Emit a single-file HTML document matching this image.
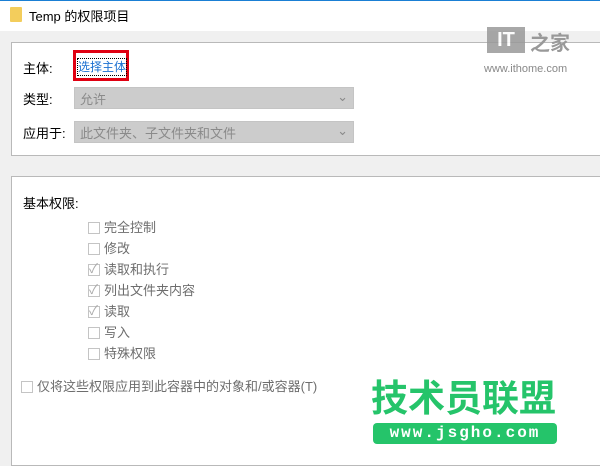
<!DOCTYPE html>
<html><head><meta charset="utf-8"><style>
body{margin:0;width:600px;height:450px;overflow:hidden;background:#f0f0f0;font-family:"Liberation Sans","Noto Sans CJK SC",sans-serif;font-size:12px;color:#000;position:relative}
.a{position:absolute}
.title{left:0;top:0;width:600px;height:31px;background:#fff;border-top:1px solid #1a7fd4;box-sizing:border-box}
.panel{background:#fff;border:1px solid #b9b9b9;box-sizing:border-box}
.dd{background:#ccc;border:1px solid #c4c4c4;box-sizing:border-box;color:#8a8a8a;padding:1px 5px;font-size:13px}
.cb{width:12px;height:12px;border:1px solid #c4c4c4;background:#fff;box-sizing:border-box}
.gt{color:#6d6d6d;font-size:13px}
</style></head><body>
<div class="a title"></div>
<div class="a" style="left:10px;top:7px;width:12px;height:15px;background:#f3cd5c;border-radius:1px"></div>
<div class="a" style="left:29px;top:6px;font-size:13px">Temp 的权限项目</div>
<div class="a panel" style="left:11px;top:42px;width:600px;height:114px"></div>
<div class="a" style="left:23px;top:58px;font-size:13px">主体:</div>
<div class="a" style="left:73px;top:50px;width:56px;height:31px;border:3px solid #e00012;box-sizing:border-box"></div>
<div class="a" style="left:77px;top:58px;color:#1a6fd0;border:1px dotted #000;padding:0;font-size:12px;line-height:16px">选择主体</div>
<div class="a" style="left:23px;top:89px;font-size:13px">类型:</div>
<div class="a dd" style="left:74px;top:87px;width:280px;height:22px">允许<span style="position:absolute;right:5px;top:1px">⌄</span></div>
<div class="a" style="left:23px;top:123px;font-size:13px">应用于:</div>
<div class="a dd" style="left:74px;top:121px;width:280px;height:22px">此文件夹、子文件夹和文件<span style="position:absolute;right:5px;top:1px">⌄</span></div>
<div class="a panel" style="left:11px;top:176px;width:600px;height:290px"></div>
<div class="a" style="left:23px;top:193px;font-size:13px">基本权限:</div>
<div class="a cb" style="left:88px;top:222px"></div><div class="a gt" style="left:104px;top:217px">完全控制</div>
<div class="a cb" style="left:88px;top:243px"></div><div class="a gt" style="left:104px;top:238px">修改</div>
<div class="a cb" style="left:88px;top:264px"></div><div class="a gt" style="left:89px;top:258px;color:#aaa">✓</div><div class="a gt" style="left:104px;top:259px">读取和执行</div>
<div class="a cb" style="left:88px;top:285px"></div><div class="a gt" style="left:89px;top:279px;color:#aaa">✓</div><div class="a gt" style="left:104px;top:280px">列出文件夹内容</div>
<div class="a cb" style="left:88px;top:306px"></div><div class="a gt" style="left:89px;top:300px;color:#aaa">✓</div><div class="a gt" style="left:104px;top:301px">读取</div>
<div class="a cb" style="left:88px;top:327px"></div><div class="a gt" style="left:104px;top:322px">写入</div>
<div class="a cb" style="left:88px;top:348px"></div><div class="a gt" style="left:104px;top:343px">特殊权限</div>
<div class="a cb" style="left:21px;top:381px"></div><div class="a gt" style="left:37px;top:376px">仅将这些权限应用到此容器中的对象和/或容器(T)</div>
<div class="a" style="left:487px;top:27px;width:38px;height:26px;background:#999;color:#fff;font-weight:bold;font-size:20px;text-align:center;line-height:26px;opacity:.85">IT</div>
<div class="a" style="left:530px;top:27px;color:#999;font-size:20px;font-weight:bold">之家</div>
<div class="a" style="left:484px;top:63px;color:#888;font-size:11px">www.ithome.com</div>
<div class="a" style="left:371px;top:378px;color:#25c46a;font-size:37px;font-weight:bold;line-height:42px">技术员联盟</div>
<div class="a" style="left:373px;top:423px;width:184px;height:21px;background:#25c46a;border-radius:4px;color:#fff;font-family:'Liberation Mono',monospace;font-weight:bold;font-size:16px;text-align:center;line-height:21px;letter-spacing:2px">www.jsgho.com</div>
</body></html>
